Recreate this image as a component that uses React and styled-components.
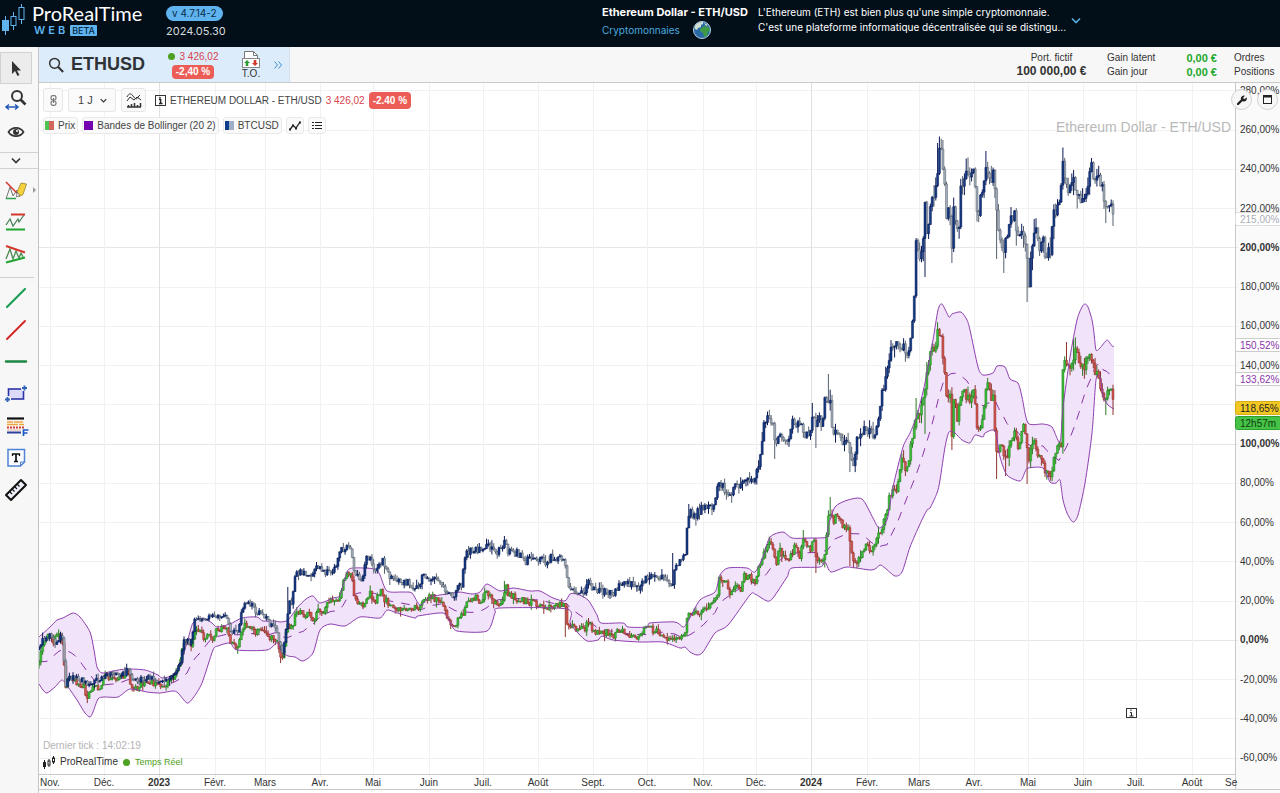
import React from "react"
import styled, { createGlobalStyle } from "styled-components"

const GlobalStyle = createGlobalStyle`
  * {
    box-sizing: border-box;
  }
  body {
    margin: 0;
    background: #fff;
    color: #333;
    font-family: "Liberation Sans", Arial, sans-serif;
    font-size: 10px;
  }
  button, select {
    font: inherit;
    color: inherit;
    margin: 0;
    padding: 0;
    border: 0;
    background: none;
    cursor: pointer;
  }
  svg {
    display: block;
    flex: none;
  }
`

/* ---------- header ---------- */

const TopBar = styled.header`
  display: grid;
  grid-template-columns: 166px 436px 156px auto 1fr;
  height: 47px;
  background: #020f19;
  color: #fff;
  font-family: Inter, sans-serif;
`

const Logo = styled.a`
  display: flex;
  gap: 6px;
  color: inherit;
  text-decoration: none;
`

const LogoName = styled.div`
  padding-top: 1px;
  font-family: Lato, sans-serif;
  font-size: 20px;
  line-height: 24px;
`

const LogoSub = styled.div`
  display: flex;
  align-items: center;
  gap: 2px;
  padding-left: 2px;
  color: #5fb4ef;
  font-size: 11px;
  font-weight: 600;
  line-height: 11px;
  letter-spacing: 3px;
`

const Beta = styled.span`
  padding: 0 2px;
  border-radius: 1px;
  background: #5fb4ef;
  color: #06283f;
  font-size: 9px;
  font-weight: 500;
  line-height: 11px;
  letter-spacing: 0;
`

const Release = styled.div`
  display: flex;
  flex-direction: column;
  align-items: flex-start;
  gap: 3px;
  padding-top: 6px;
  color: #d5dadd;
  font-size: 11px;
  line-height: 14px;
`

const Version = styled.span`
  padding: 0 6px;
  border-radius: 8px;
  background: #5fb4ef;
  color: #0a2c45;
  font-size: 10px;
  line-height: 15px;
`

const Asset = styled.div`
  padding-top: 5px;
  font-size: 11px;
  font-weight: 700;
  line-height: 15px;
  white-space: nowrap;
`

const AssetClass = styled.div`
  display: flex;
  align-items: center;
  gap: 12px;
  height: 20px;
  color: #4aa9dd;
  font-size: 10px;
  font-weight: 400;
`

const Summary = styled.p`
  margin: 0;
  padding-top: 5px;
  font-size: 10px;
  line-height: 15px;
  white-space: nowrap;
`

const Expand = styled.button`
  align-self: start;
  justify-self: start;
  padding: 17px 4px;
`

/* ---------- left tool column ---------- */

const Body = styled.div`
  display: flex;
  align-items: stretch;
`

const Tools = styled.nav`
  flex: none;
  width: 39px;
  padding-top: 5px;
  border-right: 1px solid #c4c4c4;
  background: #f7f7f7;
`

const Tool = styled.button`
  position: relative;
  display: flex;
  align-items: center;
  justify-content: center;
  width: 32px;
  height: 32px;
  border: 1px solid ${({ $active }) => ($active ? "#d2d2d2" : "transparent")};
  background: ${({ $active }) => ($active ? "#ececec" : "none")};
`

const Fold = styled.button`
  display: flex;
  align-items: center;
  justify-content: center;
  width: 38px;
  height: 17px;
  margin: 4px 0 5px;
  padding-right: 6px;
  border: solid #d2d2d2;
  border-width: 1px 0;
`

const Divider = styled.hr`
  width: 34px;
  margin: 7px 0 4px;
  border: 0;
  border-top: 1px solid #cfcfcf;
`

const More = styled.span`
  position: absolute;
  right: -5px;
  top: 12px;
`

/* ---------- instrument bar ---------- */

const Main = styled.main`
  flex: 1;
  min-width: 0;
`

const InstrumentBar = styled.div`
  display: flex;
  justify-content: space-between;
  height: 36px;
  border-bottom: 1px solid #cacaca;
  background: #f7f7f7;
`

const Instrument = styled.div`
  display: flex;
  align-items: center;
  width: 251px;
  padding-left: 9px;
  border-right: 1px solid #d3dfea;
  background: #dcecfa;
`

const Search = styled.button`
  display: flex;
  align-items: center;
  gap: 5px;
  width: 117px;
  color: #2f3336;
  font-size: 18px;
  font-weight: 700;
`

const Quote = styled.div`
  display: flex;
  flex-direction: column;
  align-items: center;
  gap: 2px;
  width: 56px;
  color: #d8434e;
  line-height: 12px;
`

const QuotePrice = styled.div`
  display: flex;
  align-items: center;
  gap: 5px;
`

const Dot = styled.i`
  width: 7px;
  height: 7px;
  border-radius: 50%;
  background: #4da020;
`

const Change = styled.span`
  padding: 0 4px;
  border-radius: 4px;
  background: #ec5d57;
  color: #fff;
  font-weight: 700;
  line-height: ${({ $tall }) => ($tall ? 17 : 14)}px;
`

const OrderPad = styled.button`
  display: flex;
  flex-direction: column;
  align-items: center;
  width: 46px;
  margin-left: 7px;
  line-height: 10px;
`

const Account = styled.div`
  display: flex;
  padding: 4px 6px 0 0;
  line-height: 14px;
  white-space: nowrap;
`

const Portfolio = styled.div`
  width: 71px;
  margin-right: 20px;
  text-align: center;
  strong {
    display: block;
    font-size: 12px;
    line-height: 13px;
  }
`

const Gains = styled.dl`
  display: grid;
  grid-template-columns: 60px 50px;
  align-content: start;
  margin: 0 17px 0 0;
  dd {
    margin: 0;
    color: #22a82b;
    font-size: 11px;
    font-weight: 700;
    text-align: right;
  }
`

const Links = styled.div`
  display: flex;
  flex-direction: column;
  width: 40px;
  a {
    color: inherit;
    text-decoration: none;
  }
`

/* ---------- chart ---------- */

const ChartArea = styled.section`
  position: relative;
`

const ChartSvg = styled.svg`
  width: 100%;
  height: auto;
  font-size: 10px;
`

const Tick = styled.text`
  fill: #333;
  font-weight: ${({ $bold }) => ($bold ? 700 : 400)};
`

const Watermark = styled.text`
  fill: #b9b9b9;
  font-size: 14px;
  text-anchor: end;
`

const ChartHead = styled.div`
  position: absolute;
  top: 5px;
  left: 4px;
  display: flex;
  flex-direction: column;
  gap: 5px;
`

const HeadRow = styled.div`
  display: flex;
  align-items: center;
  gap: ${({ $gap }) => $gap}px;
  color: #444;
  white-space: nowrap;
`

const HeadButton = styled.button`
  display: flex;
  align-items: center;
  justify-content: center;
  width: ${({ $wide }) => ($wide ? 25 : 20)}px;
  height: 24px;
  border: 1px solid #e6e6e6;
  border-radius: 3px;
  background: #fafafa;
`

const Period = styled.label`
  display: flex;
  align-items: center;
  height: 24px;
  padding: 0 8px 0 9px;
  border: 1px solid #e6e6e6;
  border-radius: 3px;
  background: #fafafa;
  select {
    width: 22px;
    appearance: none;
    font-size: 11px;
  }
`

const Title = styled.div`
  display: flex;
  align-items: center;
  gap: 4px;
  padding-left: 4px;
`

const TitlePrice = styled.span`
  color: #d8434e;
`

const Chip = styled.button`
  display: flex;
  align-items: center;
  gap: 4px;
  height: 17px;
  padding: 0 2px 0 1px;
  border: 1px solid #e9e9e9;
  border-radius: 3px;
  background: #fafafa;
`

const IconChip = styled(Chip)`
  justify-content: center;
  width: 18px;
  padding: 0;
`

const Swatch = styled.i`
  width: 9px;
  height: 9px;
  background: linear-gradient(90deg, ${({ $a }) => $a} 50%, ${({ $b }) => $b} 50%);
`

const Corner = styled.div`
  position: absolute;
  top: 6px;
  right: 2px;
  display: flex;
  gap: 5px;
`

const Round = styled.button`
  display: flex;
  align-items: center;
  justify-content: center;
  width: 21px;
  height: 21px;
  border: 1px solid #d0d0d0;
  border-radius: 50%;
  background: #f7f7f7;
`

const Status = styled.div`
  position: absolute;
  left: 4px;
  bottom: 23px;
  line-height: 16px;
`

const LastTick = styled.div`
  color: #b3b3b3;
`

const Feed = styled.div`
  display: flex;
  align-items: center;
  gap: 5px;
`

const Live = styled.span`
  color: #4da020;
  font-size: 9px;
`

/* ---------- data ---------- */

const btc = [
  [39, 650], [42, 638], [46, 640], [50, 636], [54, 643], [57, 645], [60, 633], [63, 643], [64, 660], [66, 687],
  [67, 678], [70, 676], [75, 679], [80, 680], [85, 682], [90, 685], [95, 680], [100, 683], [102, 678], [104, 675],
  [110, 675], [118, 676], [125, 673], [127, 669], [130, 676], [133, 680], [145, 679], [150, 678], [158, 680],
  [165, 679], [172, 676], [176, 674], [180, 663], [182, 650], [184, 639], [187, 640], [190, 643], [193, 632],
  [194, 622], [198, 619], [205, 618], [215, 616], [220, 615], [225, 618], [229, 622], [230, 630], [234, 632],
  [239, 629], [241, 612], [244, 604], [250, 603], [253, 606], [257, 612], [265, 616], [269, 618], [270, 625],
  [276, 626], [279, 640], [281, 650], [283, 655], [285, 640], [287, 615], [289, 605], [292, 600], [294, 580],
  [297, 575], [301, 572], [305, 573], [308, 577], [312, 575], [315, 570], [320, 568], [325, 572], [330, 572],
  [335, 570], [338, 558], [341, 549], [344, 548], [350, 550], [352, 557], [354, 571], [358, 578], [363, 577],
  [366, 557], [372, 560], [375, 571], [382, 560], [387, 570], [393, 582], [407, 582], [418, 588], [423, 573],
  [430, 582], [437, 579], [440, 585], [447, 590], [453, 598], [457, 588], [462, 585], [463, 568], [467, 552],
  [473, 550], [482, 550], [488, 545], [493, 552], [500, 550], [505, 543], [508, 550], [522, 555], [525, 561],
  [540, 559], [547, 562], [552, 557], [565, 560], [567, 577], [569, 591], [585, 591], [589, 577], [592, 590],
  [610, 593], [613, 597], [617, 588], [627, 582], [638, 588], [647, 578], [657, 574], [663, 577], [667, 583],
  [673, 582], [674, 570], [680, 563], [686, 553], [687, 525], [690, 513], [695, 515], [703, 507], [715, 505],
  [718, 485], [723, 487], [727, 498], [732, 493], [737, 483], [739, 493], [743, 482], [755, 480], [757, 470],
  [761, 457], [764, 423], [768, 420], [773, 425], [775, 447], [779, 433], [787, 442], [792, 423], [802, 428],
  [808, 439], [813, 413], [816, 432], [818, 420], [823, 422], [824, 393], [830, 400], [832, 432], [840, 432],
  [843, 442], [849, 445], [851, 463], [855, 460], [857, 442], [863, 430], [875, 433], [878, 420], [882, 393],
  [887, 372], [891, 349], [893, 347], [902, 346], [907, 357], [911, 343], [912, 322], [914, 300], [916, 247],
  [919, 258], [923, 247], [924, 193], [927, 237], [930, 213], [933, 193], [937, 187], [938, 157], [941, 148],
  [943, 163], [945, 183], [947, 220], [949, 193], [952, 252], [954, 197], [957, 233], [959, 230], [961, 180],
  [965, 180], [967, 170], [970, 178], [974, 163], [977, 218], [982, 193], [987, 162], [990, 180], [993, 177],
  [997, 217], [999, 237], [1001, 233], [1004, 258], [1007, 233], [1012, 220], [1014, 207], [1017, 230],
  [1023, 237], [1026, 237], [1027, 263], [1029, 287], [1032, 243], [1035, 230], [1040, 247], [1043, 240],
  [1044, 263], [1048, 260], [1049, 240], [1051, 257], [1053, 213], [1058, 210], [1060, 208], [1062, 163],
  [1065, 177], [1068, 193], [1073, 183], [1080, 198], [1086, 198], [1088, 180], [1092, 165], [1096, 182],
  [1101, 180], [1104, 200], [1107, 213], [1112, 208], [1114, 220],
]

const eth = [
  [39, 665], [41, 648], [45, 636], [50, 636], [53, 641], [58, 633], [60, 638], [62, 641], [64, 660], [65, 697],
  [67, 680], [69, 676], [73, 680], [78, 683], [84, 686], [86, 697], [88, 697], [91, 688], [96, 686], [100, 689],
  [104, 676], [110, 678], [118, 679], [125, 675], [128, 671], [130, 680], [132, 689], [137, 689], [140, 684],
  [150, 682], [158, 686], [165, 685], [168, 680], [175, 676], [180, 663], [182, 650], [184, 640], [187, 641],
  [191, 646], [195, 632], [200, 630], [203, 637], [208, 636], [213, 638], [216, 630], [222, 629], [227, 630],
  [230, 643], [235, 647], [239, 643], [241, 630], [244, 624], [249, 626], [255, 632], [266, 632], [270, 637],
  [277, 641], [280, 655], [282, 657], [285, 645], [287, 625], [292, 629], [295, 613], [300, 613], [304, 617],
  [308, 612], [313, 620], [318, 612], [325, 609], [328, 600], [334, 604], [340, 598], [343, 580], [346, 574],
  [351, 573], [353, 590], [357, 603], [363, 605], [370, 594], [375, 602], [382, 590], [384, 600], [392, 605],
  [397, 610], [405, 609], [415, 608], [418, 610], [424, 598], [437, 598], [443, 602], [446, 617], [453, 628],
  [458, 620], [463, 615], [466, 600], [478, 598], [480, 605], [484, 595], [489, 592], [493, 605], [503, 600],
  [506, 587], [509, 595], [520, 600], [530, 602], [545, 606], [550, 608], [555, 604], [565, 606], [567, 625],
  [570, 627], [585, 630], [588, 620], [592, 630], [600, 633], [610, 632], [613, 640], [617, 632], [627, 632],
  [632, 637], [640, 636], [643, 629], [648, 624], [653, 631], [661, 633], [667, 642], [675, 639], [680, 641],
  [685, 633], [688, 615], [693, 612], [700, 613], [710, 603], [717, 599], [719, 575], [725, 580], [730, 592],
  [737, 587], [740, 592], [744, 575], [750, 578], [755, 580], [758, 570], [763, 555], [770, 541], [774, 550],
  [776, 563], [780, 548], [783, 558], [788, 563], [795, 547], [800, 555], [804, 540], [810, 551], [814, 540],
  [816, 557], [824, 558], [827, 530], [829, 510], [834, 520], [838, 515], [842, 525], [849, 530], [852, 557],
  [857, 560], [865, 547], [873, 550], [877, 540], [883, 523], [888, 505], [893, 485], [896, 490], [902, 460],
  [907, 470], [912, 440], [917, 417], [922, 407], [925, 390], [928, 362], [932, 350], [936, 350], [937, 327],
  [941, 337], [943, 353], [946, 393], [950, 393], [952, 440], [954, 397], [957, 420], [962, 388], [966, 398],
  [971, 398], [973, 382], [977, 425], [983, 422], [987, 375], [990, 397], [993, 397], [997, 460], [1000, 443],
  [1005, 463], [1010, 442], [1014, 433], [1017, 445], [1020, 442], [1023, 427], [1026, 433], [1028, 467],
  [1032, 447], [1035, 445], [1040, 457], [1043, 460], [1046, 473], [1052, 477], [1054, 457], [1057, 450],
  [1059, 445], [1061, 453], [1062, 380], [1064, 363], [1070, 370], [1075, 350], [1080, 367], [1087, 363],
  [1092, 355], [1094, 375], [1099, 373], [1102, 397], [1106, 403], [1110, 383], [1114, 407],
]

const upper = [
  [39, 637], [50, 627], [57, 620], [63, 618], [73, 613], [80, 617], [90, 632], [94, 650], [97, 667], [102, 673],
  [113, 671], [127, 669], [145, 670], [158, 675], [162, 678], [173, 675], [180, 663], [187, 643], [193, 623],
  [203, 618], [212, 623], [217, 627], [230, 624], [242, 618], [257, 617], [263, 621], [275, 621], [280, 622],
  [288, 620], [297, 608], [306, 599], [313, 596], [320, 603], [333, 598], [340, 595], [347, 572], [353, 568],
  [375, 569], [380, 575], [387, 591], [403, 592], [412, 593], [420, 605], [430, 597], [440, 595], [453, 593],
  [460, 592], [472, 594], [480, 592], [487, 584], [500, 591], [513, 588], [530, 591], [540, 591], [553, 598],
  [565, 601], [570, 594], [577, 594], [588, 600], [597, 615], [601, 623], [623, 623], [628, 627], [647, 627],
  [650, 623], [675, 622], [683, 627], [687, 623], [700, 600], [715, 592], [720, 575], [728, 568], [747, 568],
  [755, 572], [763, 557], [770, 537], [783, 532], [792, 538], [810, 538], [827, 537], [828, 527], [835, 507],
  [848, 500], [862, 499], [873, 518], [879, 528], [887, 520], [893, 487], [903, 447], [910, 433], [917, 415],
  [925, 383], [933, 340], [938, 310], [942, 304], [949, 317], [952, 314], [961, 312], [967, 320], [970, 330],
  [978, 367], [983, 375], [993, 373], [997, 366], [1005, 367], [1010, 379], [1018, 383], [1022, 397],
  [1028, 423], [1043, 424], [1052, 427], [1060, 442], [1063, 407], [1070, 357], [1077, 320], [1082, 307],
  [1085, 304], [1088, 307], [1092, 320], [1094, 333], [1096, 350], [1100, 348], [1107, 340], [1112, 346],
  [1114, 346],
]

const lower = [
  [39, 684], [43, 690], [47, 693], [55, 687], [62, 680], [68, 687], [77, 700], [85, 713], [90, 717], [93, 712],
  [98, 699], [104, 697], [118, 697], [130, 689], [147, 692], [160, 693], [173, 691], [178, 693], [187, 703],
  [193, 698], [202, 683], [213, 650], [218, 646], [230, 643], [237, 650], [267, 650], [277, 643], [282, 652],
  [288, 656], [295, 657], [303, 661], [313, 653], [320, 630], [330, 624], [345, 626], [360, 617], [380, 618],
  [387, 610], [397, 613], [415, 618], [418, 616], [443, 613], [450, 622], [457, 631], [487, 631], [495, 613],
  [500, 608], [567, 609], [570, 623], [578, 633], [587, 641], [598, 640], [602, 636], [613, 640], [640, 642],
  [663, 642], [680, 648], [685, 647], [690, 652], [697, 655], [703, 652], [715, 633], [728, 625], [750, 595],
  [755, 594], [767, 601], [773, 598], [787, 577], [792, 568], [820, 567], [825, 562], [831, 572], [847, 567],
  [872, 570], [880, 565], [885, 568], [895, 576], [902, 572], [910, 547], [920, 524], [927, 510], [930, 508],
  [937, 493], [940, 480], [945, 447], [949, 432], [955, 433], [962, 440], [970, 443], [975, 435], [983, 437],
  [985, 433], [995, 431], [1000, 457], [1007, 475], [1020, 481], [1025, 472], [1028, 468], [1043, 468],
  [1050, 482], [1056, 483], [1060, 480], [1063, 500], [1067, 513], [1073, 522], [1078, 515], [1085, 483],
  [1092, 433], [1096, 380], [1100, 377], [1103, 395], [1108, 405], [1114, 409],
]

// long shadows, [x, y reached]
const btcWicks = [[288, 587], [344, 543], [505, 536], [689, 504], [674, 553], [813, 403], [830, 374], [816, 448],
  [851, 472], [775, 459], [926, 277], [939, 143], [943, 140], [952, 263], [987, 151], [997, 259], [1004, 273],
  [1028, 302], [1036, 219], [1064, 158], [1075, 170], [1093, 158], [1107, 223], [1114, 226]]
const ethWicks = [[281, 663], [506, 581], [567, 637], [804, 530], [831, 497], [816, 573], [851, 566], [917, 398],
  [926, 434], [953, 450], [997, 479], [1007, 476], [1028, 484], [1067, 342], [1075, 339], [1107, 415], [1114, 415]]

const months = [
  [50, "Nov."], [104, "Déc."], [159, "2023"], [215, "Févr."], [265, "Mars"], [320, "Avr."], [373, "Mai"],
  [429, "Juin"], [483, "Juil."], [538, "Août"], [593, "Sept."], [647, "Oct."], [703, "Nov."], [756, "Déc."],
  [811, "2024"], [867, "Févr."], [919, "Mars"], [974, "Avr."], [1028, "Mai"], [1083, "Juin"], [1136, "Juil."],
  [1192, "Août"],
]

const levels = Array.from({ length: 18 }, (_, i) => 280 - i * 20)
// 120 sits behind the last price tag
const labelled = levels.filter(l => l !== 120)
const levelY = pct => 640.4 - pct * 1.9625
const percent = n => `${n},00%`

const at = (points, x) => {
  const i = points.findIndex(p => p[0] >= x)
  if (i <= 0) return points[i === 0 ? 0 : points.length - 1][1]
  const [x0, y0] = points[i - 1]
  const [x1, y1] = points[i]
  return y0 + ((y1 - y0) * (x - x0)) / (x1 - x0)
}

const toPath = points => "M" + points.map(p => p.join(" ")).join("L")

// curve through the points, tangents kept short so it never overshoots much
const toCurve = points =>
  points.reduce((d, [x, y], i) => {
    if (i === 0) return `${x} ${y}`
    const p0 = points[i - 2] || points[i - 1]
    const p1 = points[i - 1]
    const p3 = points[i + 1] || points[i]
    const c1 = [p1[0] + (x - p0[0]) / 8, p1[1] + (y - p0[1]) / 8]
    const c2 = [x - (p3[0] - p1[0]) / 8, y - (p3[1] - p1[1]) / 8]
    return `${d}C${[...c1, ...c2, x, y].map(n => n.toFixed(1)).join(" ")}`
  }, "")

const random = seed => () => {
  seed = (seed * 16807) % 2147483647
  return seed / 2147483647
}

const STEP = 1.79

const buildCandles = (points, wicks, seed) => {
  const rnd = random(seed)
  const out = []
  let open = points[0][1]
  for (let x = 39; x <= 1114; x += STEP) {
    const base = at(points, x)
    const vol = 6 + Math.max(0, 640 - base) * 0.022
    const close = base + (rnd() - 0.5) * vol
    let top = Math.min(open, close) - rnd() * rnd() * vol
    let bottom = Math.max(open, close) + rnd() * rnd() * vol
    wicks.forEach(([wx, wy]) => {
      if (wx >= x && wx < x + STEP) {
        top = Math.min(top, wy)
        bottom = Math.max(bottom, wy)
      }
    })
    out.push({ x, open, close, top, bottom })
    open = close
  }
  return out
}

const middle = Array.from({ length: 270 }, (_, i) => {
  const x = 39 + i * 4
  return [x, (at(upper, x) + at(lower, x)) / 2]
})

const btcCandles = buildCandles(btc, btcWicks, 77)
const ethCandles = buildCandles(eth, ethWicks, 4242)

const Candles = ({ data, up, down, upWick, downWick }) => {
  const part = rising => data.filter(c => c.close < c.open === rising)
  const wicks = list => list.map(c => `M${c.x.toFixed(1)} ${c.top.toFixed(1)}V${c.bottom.toFixed(1)}`).join("")
  const bodies = list =>
    list
      .map(c => {
        const y = Math.min(c.open, c.close)
        const h = Math.max(1, Math.abs(c.open - c.close))
        return `M${(c.x - 1).toFixed(1)} ${y.toFixed(1)}h2v${h.toFixed(1)}h-2z`
      })
      .join("")
  return (
    <g>
      <path d={wicks(part(false))} stroke={downWick} fill="none" />
      <path d={wicks(part(true))} stroke={upWick} fill="none" />
      <path d={bodies(part(false))} fill={down} stroke={downWick} strokeWidth="0.5" />
      <path d={bodies(part(true))} fill={up} stroke={upWick} strokeWidth="0.5" />
    </g>
  )
}

const Tag = ({ y, fill, stroke, color, children }) => (
  <g>
    <rect x="1235.5" y={y - 6.5} width="46" height="13" rx="2" fill={fill} stroke={stroke} />
    <text x="1240" y={y + 4} fill={color}>
      {children}
    </text>
  </g>
)

const Chart = () => (
  <ChartSvg viewBox="39 83 1241 710" role="img" aria-label="Ethereum Dollar - ETH/USD">
    <rect x="1235" y="83" width="45" height="710" fill="#fafafa" />
    <g fill="none" strokeWidth="1" shapeRendering="crispEdges">
      {levels.map(l => (
        <path key={l} d={`M39 ${levelY(l)}H1238`} stroke={l % 100 === 0 && l >= 0 ? "#e6e6e6" : "#f1f1f1"} />
      ))}
      {months.map(([x, name]) => (
        <path key={x} d={`M${x + 0.5} 83V777`} stroke={/^\d/.test(name) ? "#e0e0e0" : "#f1f1f1"} />
      ))}
      <path d="M39 774.5H1235M39 789.5H1280M1235.5 83V789" stroke="#c8c8c8" />
    </g>
    <Watermark x="1231" y="132">Ethereum Dollar - ETH/USD</Watermark>

    <path d={"M" + toCurve(upper) + "L" + toCurve([...lower].reverse()) + "Z"} fill="#f1e3f9" />
    <path d={toPath(middle)} fill="none" stroke="#8a35a8" strokeDasharray="9 8" />
    <Candles data={ethCandles} up="#35c035" down="#d2544c" upWick="#2c7a22" downWick="#8e3430" />
    <path d={"M" + toCurve(upper)} fill="none" stroke="#8d3fae" strokeLinejoin="round" />
    <path d={"M" + toCurve(lower)} fill="none" stroke="#8d3fae" strokeLinejoin="round" />
    <Candles data={btcCandles} up="#123a84" down="#a3adb9" upWick="#0a1a55" downWick="#56606e" />

    {labelled.map(l => (
      <Tick key={l} x="1240" y={levelY(l) + 3} $bold={l === 0 || l === 100 || l === 200}>
        {percent(l)}
      </Tick>
    ))}
    <Tag y={219} fill="#fff" stroke="#ddd" color="#a9adb5">215,00%</Tag>
    <Tag y={345} fill="#fff" stroke="#ccc" color="#8a35a8">150,52%</Tag>
    <Tag y={379} fill="#fff" stroke="#ccc" color="#8a35a8">133,62%</Tag>
    <Tag y={408} fill="#f2c922" stroke="#d9ac12" color="#222">118,65%</Tag>
    <Tag y={423} fill="#46c246" stroke="#2ea02e" color="#103d10">12h57m</Tag>

    {months.map(([x, name]) => (
      <Tick key={x} x={x} y="786" textAnchor="middle" $bold={/^\d/.test(name)}>
        {name}
      </Tick>
    ))}
    <Tick x="1225" y="786">Se</Tick>
    <g>
      <rect x="1126.5" y="708.5" width="10" height="9" fill="#fff" stroke="#333" />
      <path d="M1131 709.500v1.500M1130 712.500h1.500v3.500M1129.500 716h4" stroke="#222" fill="none" />
    </g>
  </ChartSvg>
)

/* ---------- icons ---------- */

const Icon = ({ size = 22, children, ...rest }) => (
  <svg width={size} height={size} viewBox="0 0 22 22" fill="none" aria-hidden="true" {...rest}>
    {children}
  </svg>
)

const Chevron = ({ color = "#333", width = 10 }) => (
  <svg width={width} height="7" viewBox="0 0 10 7" fill="none" aria-hidden="true">
    <path d="M1 1.500 5 5.500 9 1.500" stroke={color} strokeWidth="1.700" />
  </svg>
)

const InfoIcon = () => (
  <svg width="11" height="11" viewBox="0 0 11 11" fill="none" aria-hidden="true">
    <rect x="0.5" y="0.5" width="10" height="10" stroke="#333" />
    <path d="M5 2v1.500M4 4.500h1.700V8.500M4 8.500h3.500" stroke="#222" strokeWidth="1.300" />
  </svg>
)

const LogoIcon = () => (
  <svg width="26" height="40" viewBox="0 0 26 40" fill="none" stroke="#5fb4ef" aria-hidden="true">
    <path d="M5.500 16v19M13.500 12v4M13.500 26v4M21.500 4v3M21.500 20v4" />
    <rect x="2" y="20" width="7" height="11" fill="#5fb4ef" stroke="none" />
    <rect x="11" y="16.500" width="5" height="9" />
    <rect x="19" y="7.500" width="5" height="12" />
  </svg>
)

const Globe = () => (
  <svg width="20" height="20" viewBox="0 0 20 20" aria-hidden="true">
    <circle cx="10" cy="10" r="8.500" fill="#2a68a8" stroke="#b4d3e6" />
    <path d="M3 6c2-3 5-4.500 8-4l0 2-2 1 0 2-3 1-1 2-2-1z" fill="#cfdfd0" />
    <path d="M8 9l4-3 5 1 1 4-2 1-1 4-3 1-1-4-3-2z" fill="#3f9a48" />
    <path d="M12 3l4 2-2 1z" fill="#cfdcc9" />
  </svg>
)

const tools = {
  cursor: <path d="M7 4v13l3-3 2.500 5 2-1-2.500-4.500h4z" fill="#333" />,
  zoom: (
    <>
      <circle cx="12" cy="7" r="5" stroke="#333" strokeWidth="2" />
      <path d="m15.500 10.500 5 5" stroke="#333" strokeWidth="2.600" />
      <path d="M1 18h12M4 15.500 1 18l3 2.500M10 15.500l3 2.500-3 2.500" stroke="#2456b8" strokeWidth="1.500" />
    </>
  ),
  eye: (
    <>
      <path d="M3.500 11C7 5.500 15 5.500 18.500 11 15 16.500 7 16.500 3.500 11z" stroke="#333" strokeWidth="1.700" />
      <circle cx="11" cy="11" r="3" fill="#333" />
      <circle cx="12" cy="10" r="1" fill="#fff" />
    </>
  ),
  draw: (
    <>
      <path d="m1 20 4-12 3 9 4-6 1 6" stroke="#777" />
      <path d="m1 3 11 11" stroke="#d4372c" strokeWidth="1.500" />
      <path d="M1 19.500h10" stroke="#2ba04a" strokeWidth="1.500" />
      <path d="m12 13 4-9 5.500 1-3.500 10.500-4 2z" fill="#f5d23c" stroke="#8c7420" strokeWidth="0.700" />
      <path d="m11.500 18 .5-5 3 3.500z" fill="#eee" stroke="#444" strokeWidth="0.600" />
    </>
  ),
  range: (
    <>
      <path d="m1 14 4-6 3 7 5-7 1 3 5-7" stroke="#3f7c52" strokeWidth="1.200" />
      <path d="M6 3.500h14" stroke="#d4372c" strokeWidth="2" />
      <path d="M1 18.500h19" stroke="#1fa52f" strokeWidth="2" />
    </>
  ),
  triangle: (
    <>
      <path d="m1 16 4-10 3 10 3-8 3 7 2-5 2 4" stroke="#4b8a52" strokeWidth="1.300" />
      <path d="m1 3 19 6.500" stroke="#d4372c" strokeWidth="2" />
      <path d="m1 19.500 19-5" stroke="#1fa52f" strokeWidth="2" />
    </>
  ),
  greenLine: <path d="M2 20 20 2" stroke="#1f9f56" strokeWidth="2.200" strokeLinecap="round" />,
  redLine: <path d="M2 20 20 2" stroke="#d3262b" strokeWidth="1.900" strokeLinecap="round" />,
  level: <path d="M1 10.500h20" stroke="#1d8745" strokeWidth="2.400" strokeLinecap="round" />,
  zone: (
    <>
      <rect x="3.500" y="6" width="15" height="10" fill="#dcdcfa" stroke="#2c35a8" strokeWidth="1.600" />
      <path d="M19 2v6M16 5h6M3 13v6M0 16h6" stroke="#f7f7f7" strokeWidth="3.500" />
      <path d="M19.500 2.500v5M17 5h5M2.500 14v5M0 16.500h5" stroke="#2f62b8" strokeWidth="1.800" />
    </>
  ),
  fibonacci: (
    <>
      <path d="M2 3.500h17" stroke="#111" strokeWidth="2.200" />
      <path d="M2 7h6M9 7h9M2 9.500h11M14 9.500h5" stroke="#f0a33c" strokeWidth="1.300" />
      <path d="M2 12.500h17" stroke="#cf3d35" strokeWidth="1.800" strokeDasharray="2 1" />
      <path d="M2 15h14" stroke="#e8b7a0" strokeWidth="1" />
      <path d="M2 17.500h14" stroke="#2a3f9e" strokeWidth="2" />
      <path d="M18.500 21v-6h5M18.500 18h4" stroke="#1c58c6" strokeWidth="1.700" />
    </>
  ),
  text: (
    <>
      <path d="M3 2.500h16.500v12.500l-4 4H3z" stroke="#4f82d6" strokeWidth="1.500" fill="#fbfcff" />
      <path d="M15.500 19v-4h4" stroke="#4f82d6" />
      <path d="M7.500 9V7h7v2" stroke="#111" strokeWidth="1.300" />
      <path d="M11 7v7.500M9 14.500h4" stroke="#111" strokeWidth="1.700" />
    </>
  ),
  ruler: (
    <>
      <path d="M1 16 16 1l5 5L6 21z" fill="#eceef8" stroke="#111" strokeWidth="2" strokeLinejoin="round" />
      <path d="m5 13 2 2M7.500 10.500l2 2M10 8l2 2M12.500 5.500l2 2" stroke="#111" strokeWidth="1.100" />
    </>
  ),
}

const ToolButton = ({ name, label, active, more }) => (
  <Tool $active={active} aria-label={label}>
    <Icon overflow="visible">{tools[name]}</Icon>
    {more && (
      <More>
        <svg width="3" height="6" viewBox="0 0 3 6"><path d="M0 0l3 3-3 3z" fill="#999" /></svg>
      </More>
    )}
  </Tool>
)

const Header = () => (
  <TopBar>
    <Logo href="#">
      <LogoIcon />
      <div>
        <LogoName>ProRealTime</LogoName>
        <LogoSub>
          WEB <Beta>BETA</Beta>
        </LogoSub>
      </div>
    </Logo>
    <Release>
      <Version>v 4.7.14-2</Version>
      <span>2024.05.30</span>
    </Release>
    <Asset>
      Ethereum Dollar - ETH/USD
      <AssetClass>
        Cryptomonnaies <Globe />
      </AssetClass>
    </Asset>
    <Summary>
      L'Ethereum (ETH) est bien plus qu'une simple cryptomonnaie.
      <br />
      C'est une plateforme informatique décentralisée qui se distingu...
    </Summary>
    <Expand aria-label="Afficher la suite">
      <Chevron color="#55a9dc" width={12} />
    </Expand>
  </TopBar>
)

const Sidebar = () => (
  <Tools>
    <ToolButton name="cursor" label="Curseur" active />
    <ToolButton name="zoom" label="Zoom" />
    <ToolButton name="eye" label="Affichage" />
    <Fold aria-label="Replier">
      <Chevron />
    </Fold>
    <ToolButton name="draw" label="Dessin" more />
    <ToolButton name="range" label="Supports et résistances" />
    <ToolButton name="triangle" label="Triangles" />
    <Divider />
    <ToolButton name="greenLine" label="Ligne haussière" />
    <ToolButton name="redLine" label="Ligne baissière" />
    <ToolButton name="level" label="Ligne horizontale" />
    <ToolButton name="zone" label="Rectangle" />
    <ToolButton name="fibonacci" label="Fibonacci" />
    <ToolButton name="text" label="Texte" />
    <ToolButton name="ruler" label="Règle" />
  </Tools>
)

const Ticker = () => (
  <InstrumentBar>
    <Instrument>
      <Search>
        <Icon size={18}>
          <circle cx="8" cy="9" r="6" stroke="#333" strokeWidth="1.800" />
          <path d="m12.500 13.500 6 6" stroke="#333" strokeWidth="2.600" />
        </Icon>
        ETHUSD
      </Search>
      <Quote>
        <QuotePrice>
          <Dot />3 426,02
        </QuotePrice>
        <Change>-2,40 %</Change>
      </Quote>
      <OrderPad>
        <svg width="18" height="19" viewBox="0 0 18 19" fill="none" aria-hidden="true">
          <path d="M2.500 9V1.500h9l4 4V9" fill="#fff" stroke="#777" />
          <path d="M11.500 1.500v4h4" stroke="#777" />
          <rect x="0.500" y="8.500" width="17" height="9" fill="#fff" stroke="#888" />
          <path d="m5 10 3 3H6.300v3H3.700v-3H2z" fill="#2c9c35" />
          <path d="m13 16 3-3h-1.700v-3h-2.600v3H10z" fill="#d4372c" />
        </svg>
        T.O.
      </OrderPad>
      <svg width="8" height="8" viewBox="0 0 8 8" fill="none" stroke="#3d8fd0" aria-hidden="true">
        <path d="m.5.5 3 3.500-3 3.500M4.500.5l3 3.500-3 3.500" />
      </svg>
    </Instrument>
    <Account>
      <Portfolio>
        Port. fictif
        <strong>100 000,00 €</strong>
      </Portfolio>
      <Gains>
        <dt>Gain latent</dt>
        <dd>0,00 €</dd>
        <dt>Gain jour</dt>
        <dd>0,00 €</dd>
      </Gains>
      <Links>
        <a href="#">Ordres</a>
        <a href="#">Positions</a>
      </Links>
    </Account>
  </InstrumentBar>
)

const App = () => (
  <>
    <GlobalStyle />
    <Header />
    <Body>
      <Sidebar />
      <Main>
        <Ticker />
        <ChartArea>
          <Chart />
          <ChartHead>
            <HeadRow $gap={5}>
              <HeadButton aria-label="Lier">
                <svg width="7" height="11" viewBox="0 0 7 11" fill="none" stroke="#777" aria-hidden="true">
                  <rect x="1" y="0.700" width="5" height="4.300" rx="1.800" strokeWidth="1.200" />
                  <rect x="1" y="6" width="5" height="4.300" rx="1.800" strokeWidth="1.200" />
                  <path d="M3.500 3v5" strokeWidth="1.200" />
                </svg>
              </HeadButton>
              <Period>
                <select aria-label="Unité de temps">
                  <option>1 J</option>
                </select>
                <Chevron width={7} />
              </Period>
              <HeadButton $wide aria-label="Indicateurs">
                <svg width="16" height="16" viewBox="0 0 16 16" fill="none" stroke="#333" aria-hidden="true">
                  <path d="M1 5c2-4 4-4 6-1s4 4 5 1l2-2M1 9l3-4 4 3 3-3 4 3" />
                  <path d="M2.500 15v-2M5.500 15v-3M8.500 15v-4M11.500 15v-2M14.500 15v-4M1 15h14" strokeWidth="1.500" />
                </svg>
              </HeadButton>
              <Title>
                <InfoIcon />
                <span>ETHEREUM DOLLAR - ETH/USD</span>
                <TitlePrice>3 426,02</TitlePrice>
                <Change $tall>-2.40 %</Change>
              </Title>
            </HeadRow>
            <HeadRow $gap={4}>
              <Chip>
                <Swatch $a="#4fc455" $b="#d2665c" /> Prix
              </Chip>
              <Chip>
                <Swatch $a="#7400b0" $b="#7400b0" /> Bandes de Bollinger (20 2)
              </Chip>
              <Chip>
                <Swatch $a="#0f3f8c" $b="#9db0c8" /> BTCUSD
              </Chip>
              <IconChip aria-label="Ajouter une courbe">
                <svg width="12" height="10" viewBox="0 0 12 10" fill="none" stroke="#222" aria-hidden="true">
                  <path d="m1 8.500 3-4 3 2.500 4-6" strokeWidth="1.300" />
                  <path d="M0 8.500h2M3 4.500h2M6 7.500h2M10 1.500h2" strokeWidth="2" />
                </svg>
              </IconChip>
              <IconChip aria-label="Liste">
                <svg width="10" height="9" viewBox="0 0 10 9" stroke="#222" aria-hidden="true">
                  <path d="M0 1.500h2M3 1.500h7M0 4.500h2M3 4.500h7M0 7.500h2M3 7.500h7" />
                </svg>
              </IconChip>
            </HeadRow>
          </ChartHead>
          <Corner>
            <Round aria-label="Réglages">
              <svg width="10" height="10" viewBox="0 0 10 10" aria-hidden="true">
                <path d="m1 9 4-4" stroke="#222" strokeWidth="2.400" strokeLinecap="round" />
                <path d="M8 .8 6.300 2.500l.3 1.200 1.200.3L9.500 2.200A3 3 0 1 1 8 .8z" fill="#222" />
              </svg>
            </Round>
            <Round aria-label="Agrandir">
              <svg width="9" height="9" viewBox="0 0 9 9" fill="none" aria-hidden="true">
                <rect x="0.500" y="0.500" width="8" height="8" stroke="#222" />
                <path d="M0 1.500h9" stroke="#222" strokeWidth="2" />
              </svg>
            </Round>
          </Corner>
          <Status>
            <LastTick>Dernier tick : 14:02:19</LastTick>
            <Feed>
              <svg width="12" height="13" viewBox="0 0 12 13" fill="none" stroke="#222" aria-hidden="true">
                <path d="M1.500 4v9M6 3v8M10.500 0v8" />
                <rect x="0.500" y="6.500" width="2" height="4" fill="#222" />
                <rect x="5" y="5" width="2" height="4" fill="#fff" />
                <rect x="9.500" y="2" width="2" height="4" fill="#fff" />
              </svg>
              ProRealTime
              <Dot />
              <Live>Temps Réel</Live>
            </Feed>
          </Status>
        </ChartArea>
      </Main>
    </Body>
  </>
)

export default App
